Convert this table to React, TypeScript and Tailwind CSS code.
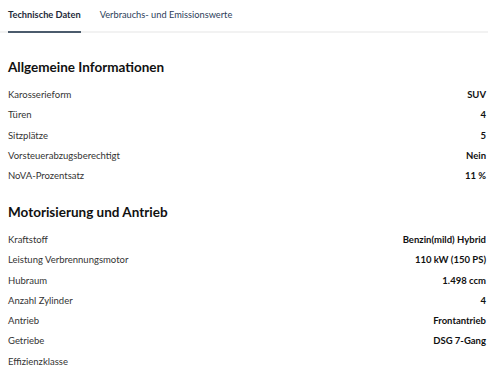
import React from 'react';

type Row = { label: string; value: string };

const allgemein: Row[] = [
  { label: 'Karosserieform', value: 'SUV' },
  { label: 'Türen', value: '4' },
  { label: 'Sitzplätze', value: '5' },
  { label: 'Vorsteuerabzugsberechtigt', value: 'Nein' },
  { label: 'NoVA-Prozentsatz', value: '11 %' },
];

const motor: Row[] = [
  { label: 'Kraftstoff', value: 'Benzin(mild) Hybrid' },
  { label: 'Leistung Verbrennungsmotor', value: '110 kW (150 PS)' },
  { label: 'Hubraum', value: '1.498 ccm' },
  { label: 'Anzahl Zylinder', value: '4' },
  { label: 'Antrieb', value: 'Frontantrieb' },
  { label: 'Getriebe', value: 'DSG 7-Gang' },
  { label: 'Effizienzklasse', value: '' },
];

function SpecSection({ title, rows }: { title: string; rows: Row[] }) {
  return (
    <section>
      <h2 className="h-[16px] flex items-center text-[13.5px] font-bold text-[#111]">{title}</h2>
      <div className="mt-[10px] flex flex-col">
        {rows.map((row) => (
          <div key={row.label} className="flex items-center justify-between h-[20.25px]">
            <span className="text-[9.5px] text-[#333]">{row.label}</span>
            <span className="text-[9.5px] font-bold text-[#111]">{row.value}</span>
          </div>
        ))}
      </div>
    </section>
  );
}

export default function App() {
  return (
    <div className="w-[500px] h-[377px] overflow-hidden bg-white font-['Lato',sans-serif]">
      <div className="mr-[12px] h-[33px] border-b-2 border-[#f2f2f2] flex gap-[19px] pl-[8px] text-[9.25px]">
        <div className="relative h-full flex items-center pb-[1px] font-bold text-[#1e2a3a]">
          Technische Daten
          <div className="absolute left-0 right-0 bottom-[-2px] h-[2px] bg-[#4b5b6c]" />
        </div>
        <div className="h-full flex items-center pb-[1px] text-[#2c3e5a]">Verbrauchs- und Emissionswerte</div>
      </div>
      <div className="pl-[8px] pr-[14px] pt-[26px] flex flex-col gap-[17.75px]">
        <SpecSection title="Allgemeine Informationen" rows={allgemein} />
        <SpecSection title="Motorisierung und Antrieb" rows={motor} />
      </div>
    </div>
  );
}
